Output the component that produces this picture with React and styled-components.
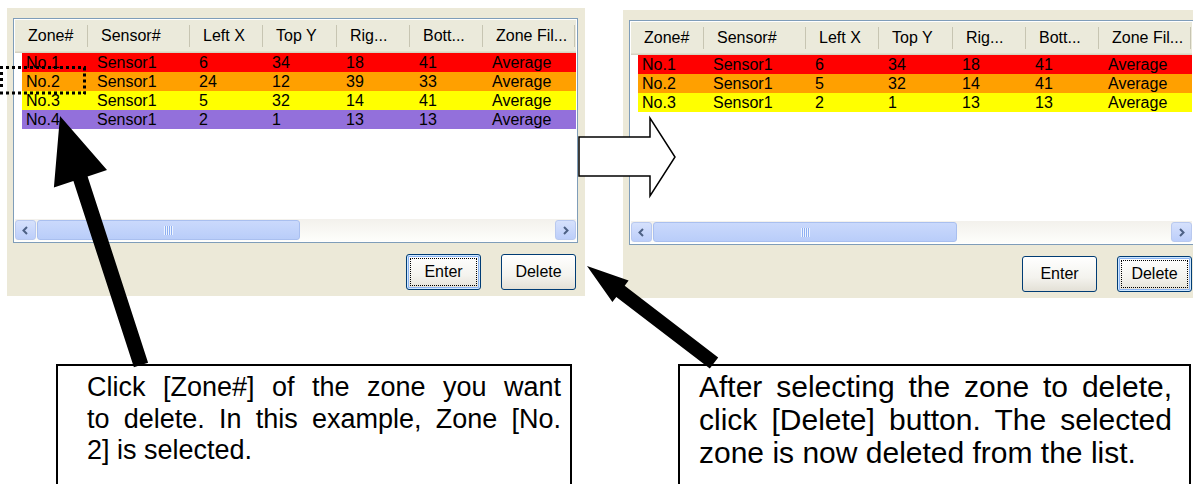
import React from "react";
import styled, { createGlobalStyle } from "styled-components";

const GlobalStyle = createGlobalStyle`
  html, body {
    margin: 0;
    padding: 0;
    background: #fff;
  }
  body {
    font-family: "Liberation Sans", Arial, sans-serif;
  }
`;

const Page = styled.div`
  position: relative;
  width: 1193px;
  height: 484px;
  overflow: hidden;
  background: #fff;
`;

const TopRow = styled.div`
  display: flex;
  align-items: flex-start;
  height: 364px;
  padding: 8px 0 0 7px;
  gap: 38px;
  box-sizing: border-box;
`;

const Panel = styled.div`
  flex: none;
  width: 578px;
  height: 288px;
  margin-top: ${(p) => p.$drop || 0}px;
  padding: 10px 0 0 6px;
  box-sizing: border-box;
  background: #ece9d8;
  display: flex;
  flex-direction: column;
`;

const ListBox = styled.div`
  width: 565px;
  height: 225px;
  box-sizing: border-box;
  border: 1px solid #7f9db9;
  padding: 1px;
  background: #fff;
  display: flex;
  flex-direction: column;
`;

const Header = styled.div`
  display: flex;
  height: 33px;
  flex: none;
  background: #ebeadb;
  box-shadow: inset 0 -1px 0 #d6d2c2, inset 0 -2px 0 #e2decd;
`;

const HeaderCell = styled.div`
  position: relative;
  flex: none;
  width: ${(p) => p.$w}px;
  box-sizing: border-box;
  padding-left: 13px;
  font-size: 16px;
  line-height: 31px;
  color: #000;
  white-space: nowrap;
  overflow: hidden;

  &::after {
    content: "";
    position: absolute;
    right: 0;
    top: 5px;
    bottom: 6px;
    width: 1px;
    background: #c7c5b2;
    box-shadow: 1px 0 0 #fff;
  }
`;

const Rows = styled.div`
  flex: 1;
  padding-left: 7px;
`;

const Row = styled.div`
  display: flex;
  height: 19px;
  background: ${(p) => p.$color};
`;

const Cell = styled.div`
  flex: none;
  width: ${(p) => p.$w}px;
  box-sizing: border-box;
  padding-left: ${(p) => (p.$first ? 4 : 9)}px;
  font-size: 16px;
  line-height: 19px;
  color: #000;
  white-space: nowrap;
  overflow: hidden;
`;

const ScrollBar = styled.div`
  display: flex;
  align-items: stretch;
  height: 22px;
  flex: none;
  background: linear-gradient(to bottom, #f3f1ec, #fefefb);
`;

const ArrowButton = styled.div`
  flex: none;
  width: 21px;
  box-sizing: border-box;
  margin: 1px 0;
  border: 1px solid #b9c9ef;
  border-radius: 3px;
  background: linear-gradient(to bottom, #d6e1fc, #bccefa);
  display: flex;
  align-items: center;
  justify-content: center;
`;

const Track = styled.div`
  flex: 1;
  display: flex;
  padding: 1px 1px;
`;

const Thumb = styled.div`
  width: ${(p) => p.$w}px;
  box-sizing: border-box;
  border: 1px solid #a9bfef;
  border-radius: 3px;
  background: linear-gradient(to bottom, #cad9fc, #b9cdf9);
  display: flex;
  align-items: center;
  justify-content: center;
`;

const Grip = styled.div`
  width: 9px;
  height: 9px;
  background: repeating-linear-gradient(
    to right,
    #eef4fe 0,
    #eef4fe 1px,
    #8fb0f2 1px,
    #8fb0f2 2px
  );
`;

const ButtonBar = styled.div`
  display: flex;
  justify-content: flex-end;
  gap: 20px;
  margin-top: 11px;
  padding-right: ${(p) => p.$right}px;
`;

const Button = styled.button`
  position: relative;
  width: 75px;
  height: 36px;
  padding: 0;
  border: 1px solid #003c74;
  border-radius: 3px;
  background: linear-gradient(to bottom, #ffffff 0%, #f4f3ee 60%, #e3e0d6 100%);
  font-family: "Liberation Sans", Arial, sans-serif;
  font-size: 16px;
  color: #000;
  box-shadow: ${(p) =>
    p.$focused ? "inset 0 0 0 1px #cee7ff, inset 0 0 0 2px #8cb4f2" : "none"};

  &::after {
    content: "";
    display: ${(p) => (p.$focused ? "block" : "none")};
    position: absolute;
    inset: 3px;
    border: 1px dotted #000;
  }
`;

const CalloutRow = styled.div`
  display: flex;
  padding-left: 56px;
  gap: 106px;
`;

const Callout = styled.div`
  flex: none;
  width: ${(p) => p.$w}px;
  height: 120px;
  box-sizing: border-box;
  border: 2px solid #000;
  border-bottom: none;
  padding: ${(p) => p.$pt}px ${(p) => p.$pr}px 0 ${(p) => p.$pl}px;
  background: #fff;
  font-family: "Liberation Sans", Arial, sans-serif;
  font-size: ${(p) => p.$size}px;
  line-height: ${(p) => p.$lh}px;
  color: #000;
`;

const Line = styled.div`
  white-space: nowrap;
  text-align: justify;
  text-align-last: ${(p) => (p.$last ? "left" : "justify")};
`;

const Overlay = styled.svg`
  position: absolute;
  left: 0;
  top: 0;
  pointer-events: none;
`;

const columns = [
  { title: "Zone#", w: 73 },
  { title: "Sensor#", w: 102 },
  { title: "Left X", w: 73 },
  { title: "Top Y", w: 74 },
  { title: "Rig...", w: 73 },
  { title: "Bott...", w: 73 },
  { title: "Zone Fil...", w: 92 },
];

const before = [
  { color: "#ff0000", cells: ["No.1", "Sensor1", "6", "34", "18", "41", "Average"] },
  { color: "#ffa000", cells: ["No.2", "Sensor1", "24", "12", "39", "33", "Average"] },
  { color: "#ffff00", cells: ["No.3", "Sensor1", "5", "32", "14", "41", "Average"] },
  { color: "#9370db", cells: ["No.4", "Sensor1", "2", "1", "13", "13", "Average"] },
];

const after = [
  { color: "#ff0000", cells: ["No.1", "Sensor1", "6", "34", "18", "41", "Average"] },
  { color: "#ffa000", cells: ["No.2", "Sensor1", "5", "32", "14", "41", "Average"] },
  { color: "#ffff00", cells: ["No.3", "Sensor1", "2", "1", "13", "13", "Average"] },
];

const Chevron = ({ dir }) => (
  <svg width="9" height="9" viewBox="0 0 9 9">
    <polyline
      points={dir === "left" ? "6,1 2.5,4.5 6,8" : "3,1 6.5,4.5 3,8"}
      fill="none"
      stroke="#4d6185"
      strokeWidth="2"
    />
  </svg>
);

const ZoneList = ({ rows, thumb }) => (
  <ListBox>
    <Header>
      {columns.map((c) => (
        <HeaderCell key={c.title} $w={c.w}>
          {c.title}
        </HeaderCell>
      ))}
    </Header>
    <Rows>
      {rows.map((r) => (
        <Row key={r.cells[0]} $color={r.color}>
          {r.cells.map((text, i) => (
            <Cell key={i} $w={i === 0 ? columns[0].w - 7 : columns[i].w} $first={i === 0}>
              {text}
            </Cell>
          ))}
        </Row>
      ))}
    </Rows>
    <ScrollBar>
      <ArrowButton>
        <Chevron dir="left" />
      </ArrowButton>
      <Track>
        <Thumb $w={thumb}>
          <Grip />
        </Thumb>
      </Track>
      <ArrowButton>
        <Chevron dir="right" />
      </ArrowButton>
    </ScrollBar>
  </ListBox>
);

const ZonePanel = ({ rows, focus, drop, thumb }) => (
  <Panel $drop={drop}>
    <ZoneList rows={rows} thumb={thumb} />
    <ButtonBar $right={9}>
      <Button $focused={focus === "enter"}>Enter</Button>
      <Button $focused={focus === "delete"}>Delete</Button>
    </ButtonBar>
  </Panel>
);

const Arrows = () => (
  <Overlay width="1193" height="484" viewBox="0 0 1193 484">
    {/* selection marker around No.2 */}
    <g stroke="#000" strokeWidth="3" strokeDasharray="3 3" fill="none">
      <line x1="0" y1="67.5" x2="86" y2="67.5" />
      <line x1="0" y1="93" x2="86" y2="93" />
      <line x1="84.5" y1="67.5" x2="84.5" y2="94" />
      <line x1="1.5" y1="72" x2="1.5" y2="90" />
    </g>
    {/* hollow arrow between panels */}
    <polygon
      points="579,137 650,137 650,118 675,157 650,196 650,176 579,176"
      fill="#fff"
      stroke="#000"
      strokeWidth="1.5"
    />
    {/* arrow to Zone# */}
    <polygon
      points="60,116 107,170 87.6,176.4 148.1,362.7 133.9,367.3 73.4,181 53.9,187.4"
      fill="#000"
    />
    {/* arrow to Delete */}
    <polygon
      points="587,266 628.6,280.5 624.7,285.7 718.2,357.4 709.8,368.6 616.3,296.9 612.4,302.1"
      fill="#000"
    />
  </Overlay>
);

export default function App() {
  return (
    <Page>
      <GlobalStyle />
      <TopRow>
        <ZonePanel rows={before} focus="enter" thumb={263} />
        <ZonePanel rows={after} focus="delete" drop={2} thumb={304} />
      </TopRow>
      <CalloutRow>
        <Callout $w={516} $pl={29} $pr={9} $pt={6} $size={27} $lh={31.5}>
          <Line>Click [Zone#] of the zone you want</Line>
          <Line>to delete. In this example, Zone [No.</Line>
          <Line $last>2] is selected.</Line>
        </Callout>
        <Callout $w={513} $pl={19} $pr={17} $pt={4} $size={30} $lh={33}>
          <Line>After selecting the zone to delete,</Line>
          <Line>click [Delete] button. The selected</Line>
          <Line $last>zone is now deleted from the list.</Line>
        </Callout>
      </CalloutRow>
      <Arrows />
    </Page>
  );
}
